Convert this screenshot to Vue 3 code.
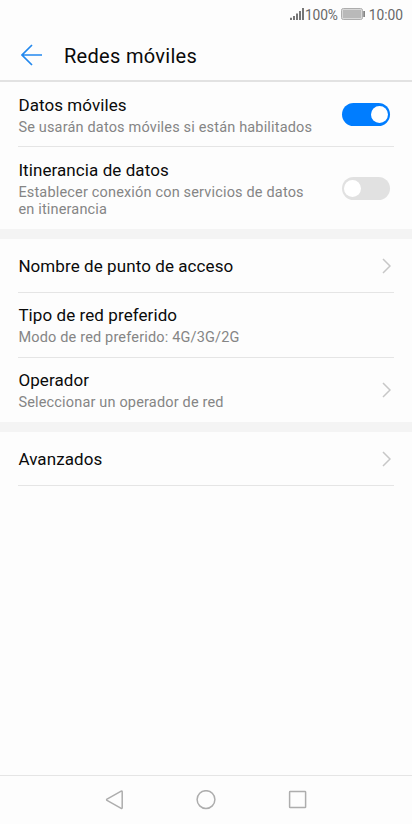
<script setup>
import { ref } from 'vue'

const groups = ref([
  [
    { id: 'data', title: 'Datos móviles', lines: ['Se usarán datos móviles si están habilitados'], toggle: true, on: true },
    { id: 'roaming', title: 'Itinerancia de datos', lines: ['Establecer conexión con servicios de datos', 'en itinerancia'], toggle: true, on: false },
  ],
  [
    { id: 'apn', title: 'Nombre de punto de acceso', lines: [], arrow: true },
    { id: 'type', title: 'Tipo de red preferido', lines: ['Modo de red preferido: 4G/3G/2G'] },
    { id: 'operator', title: 'Operador', lines: ['Seleccionar un operador de red'], arrow: true },
  ],
  [{ id: 'advanced', title: 'Avanzados', lines: [], arrow: true }],
])
</script>

<template>
  <div class="screen">
    <div class="status">
      <svg class="signal" width="15" height="14" viewBox="0 0 15 14">
        <path d="M1 10.8V13M4 9V13M7 6.5V13M10 4V13M13 1V13" stroke="#707070" stroke-width="1.9" fill="none" />
      </svg>
      <span class="percent">100%</span>
      <svg class="battery" width="24" height="12" viewBox="0 0 24 12">
        <rect x="0.5" y="0.5" width="21" height="11" rx="1.8" fill="#e6e6e6" stroke="#adadad" />
        <rect x="1.7" y="1.7" width="18.6" height="8.6" fill="#b9b9b9" />
        <path d="M23.1 3V9" stroke="#777" stroke-width="1.6" />
      </svg>
      <span class="clock">10:00</span>
    </div>

    <header class="header">
      <svg class="back" width="22" height="22" viewBox="0 0 22 22">
        <path d="M11 1L1 11L11 21M1 11H21" fill="none" stroke="#2388ee" stroke-width="1.7" />
      </svg>
      <h1 class="heading">Redes móviles</h1>
    </header>

    <main class="content">
      <section v-for="(group, g) in groups" :key="g" class="group">
        <div v-for="row in group" :key="row.id" class="row" :class="{ single: !row.lines.length }">
          <div class="text">
            <div class="title">{{ row.title }}</div>
            <div v-if="row.lines.length" class="sub">
              <div v-for="line in row.lines" :key="line">{{ line }}</div>
            </div>
          </div>
          <button v-if="row.toggle" class="switch" :class="{ on: row.on }" @click="row.on = !row.on">
            <span class="knob"></span>
          </button>
          <svg v-if="row.arrow" class="arrow" width="9" height="16" viewBox="0 0 9 16">
            <path d="M1 1L8 8L1 15" fill="none" stroke="#c7c7c7" stroke-width="1.5" />
          </svg>
        </div>
      </section>
    </main>

    <nav class="nav">
      <svg width="20" height="20" viewBox="0 0 20 20">
        <path d="M17.2 2V17.8Q17.2 18.8 16.2 18.3L2 10.4Q1.2 9.8 2 9.2L16.2 1.2Q17.2 .8 17.2 2Z" fill="none" stroke="#adadad" stroke-width="1.5" stroke-linejoin="round" />
      </svg>
      <svg width="20" height="20" viewBox="0 0 20 20">
        <circle cx="10" cy="9.6" r="8.9" fill="none" stroke="#adadad" stroke-width="1.5" />
      </svg>
      <svg width="20" height="20" viewBox="0 0 20 20">
        <rect x="2.6" y="1.6" width="16" height="16" rx="0.6" fill="none" stroke="#adadad" stroke-width="1.5" />
      </svg>
    </nav>
  </div>
</template>

<style>
body { background: #fdfdfd; }
</style>

<style scoped>
.screen {
  box-sizing: border-box;
  width: 412px;
  height: 824px;
  display: flex;
  flex-direction: column;
  background: #fdfdfd;
  color: #0a0a0a;
  font-family: Roboto, "Noto Sans", sans-serif;
}
.screen svg { display: block; flex: none; }
.status {
  height: 28px;
  display: flex;
  align-items: center;
  justify-content: flex-end;
  padding-right: 9px;
  font-size: 13.8px;
  color: #686868;
}
.percent { margin: 1px 3px 0 0; letter-spacing: -0.2px; }
.battery { margin-right: 4px; }
.clock { margin-top: 1px; }
.header {
  box-sizing: border-box;
  height: 54px;
  padding: 0 21px;
  display: flex;
  align-items: center;
  border-bottom: 2px solid #e2e2e2;
}
.back { margin-top: 2px; }
.heading {
  margin: 3px 0 0 21px;
  font-size: 20px;
  line-height: 24px;
  font-weight: 400;
  letter-spacing: 0.3px;
}
.content { flex: 1; }
.group + .group { border-top: 10px solid #f4f4f4; }
.row {
  box-sizing: border-box;
  margin: 0 18px;
  padding-right: 3px;
  display: flex;
  align-items: center;
  justify-content: space-between;
  border-bottom: 1px solid #e5e5e5;
}
.group:not(:last-child) .row:last-child { border-bottom: 0; }
.text { padding: 13px 0 9px 0.4px; }
.group:nth-child(2) .text { padding: 12px 0 10px 0.4px; }
.single { height: 54px; }
.group .single .text { padding: 1px 0 0 0.4px; }
.title { font-size: 17px; line-height: 20px; letter-spacing: 0.08px; }
.sub {
  margin-top: 4px;
  font-size: 14.5px;
  line-height: 18px;
  letter-spacing: 0.17px;
  color: #858585;
  white-space: nowrap;
}
.sub > div + div { margin: -1px 0 1px; }
.switch {
  width: 48px;
  height: 23px;
  margin-right: 1px;
  flex: none;
  box-sizing: border-box;
  padding: 3px 2px;
  border: 0;
  border-radius: 12px;
  display: flex;
  align-items: center;
  background: #e1e1e1;
}
.switch.on { justify-content: flex-end; background: #007dff; }
.knob { width: 17px; height: 17px; border-radius: 50%; background: #fff; }
.nav {
  box-sizing: border-box;
  height: 49px;
  border-top: 1px solid #e5e5e5;
  display: flex;
  justify-content: space-between;
  align-items: center;
  padding: 0 105px;
}
</style>
